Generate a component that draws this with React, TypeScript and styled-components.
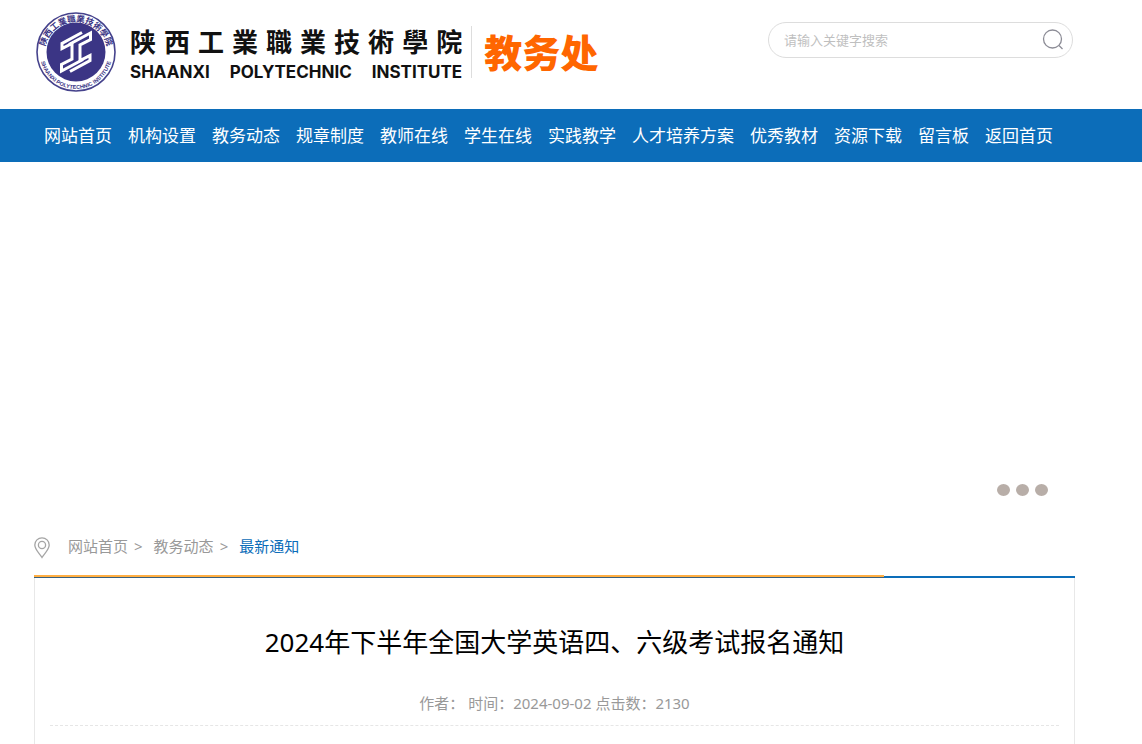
import React from "react";
import styled, { createGlobalStyle } from "styled-components";

const Global = createGlobalStyle`
  * { box-sizing: border-box; }
  body {
    margin: 0;
    background: #fff;
    color: #000;
    font-family: "Noto Sans", "Noto Sans CJK SC", sans-serif;
    font-size: 15px;
  }
  a { color: inherit; text-decoration: none; }
`;

const Header = styled.header`
  display: flex;
  justify-content: space-between;
  align-items: flex-start;
  height: 109px;
  padding: 12px 69px 0 36px;
`;

const Brand = styled.a`
  display: flex;
  align-items: center;
  white-space: nowrap;
`;

const School = styled.span`
  display: flex;
  flex-direction: column;
  margin-left: 14px;
  padding-top: 4px;
`;

const SchoolName = styled.span`
  display: flex;
  gap: 8px;
  font-size: 26px;
  line-height: 36px;
  font-weight: 700;
  color: #111;
`;

const SchoolLatin = styled.span`
  display: flex;
  justify-content: space-between;
  font: 700 17px/24px Inter, sans-serif;
  color: #111;
`;

const Department = styled.span`
  margin-left: 9px;
  padding-left: 12px;
  border-left: 1px solid #ddd;
  font-size: 38px;
  line-height: 52px;
  font-weight: 900;
  color: #ff6600;
`;

const SearchBox = styled.form`
  display: flex;
  align-items: center;
  width: 305px;
  height: 36px;
  margin-top: 10px;
  padding: 0 8px 1px 15px;
  border: 1px solid #ddd;
  border-radius: 18px;
`;

const SearchInput = styled.input`
  flex: 1;
  min-width: 0;
  padding: 0;
  border: 0;
  outline: 0;
  background: none;
  font: inherit;
  font-size: 13px;
  &::placeholder { color: #bfbfbf; opacity: 1; }
`;

const SearchButton = styled.button`
  display: flex;
  padding: 0;
  border: 0;
  background: none;
`;

const Nav = styled.nav`
  display: flex;
  gap: 16px;
  height: 53px;
  padding: 0 44px;
  background: #0c6db9;
  color: #fff;
  font-size: 17px;
  line-height: 53px;
  white-space: nowrap;
`;

const Banner = styled.section`
  display: flex;
  justify-content: flex-end;
  align-items: flex-end;
  gap: 6px;
  height: 334px;
  padding-right: 94px;
`;

const Dot = styled.button`
  width: 13px;
  height: 12px;
  padding: 0;
  border: 0;
  border-radius: 50%;
  background: #b8aea8;
`;

const Main = styled.main`
  margin: 0 67px 0 34px;
`;

const Crumbs = styled.nav`
  display: flex;
  align-items: center;
  height: 79px;
  padding-top: 20px;
  color: #999;
  line-height: 22px;
`;

const PinIcon = styled.svg`
  margin-top: 4px;
`;

const CrumbLink = styled.a`
  margin-right: 6px;
`;

const Arrow = styled.span`
  margin-right: 11px;
`;

const Current = styled.a`
  color: #0c6db9;
`;

const Rule = styled.div`
  height: 3px;
  border-bottom: 2px solid #0c6db9;
`;

const RuleAccent = styled.div`
  width: calc(100% - 191px);
  height: 3px;
  background: #ffae42;
  border-bottom: 1px solid #39617f;
`;

const Article = styled.article`
  min-height: 190px;
  padding: 0 15px;
  border: solid #e8e8e8;
  border-width: 0 1px;
  text-align: center;
`;

const Title = styled.h1`
  margin: 0;
  padding-top: 44px;
  font-size: 26px;
  line-height: 40px;
  font-weight: 400;
`;

const Meta = styled.p`
  margin: 0;
  padding: 29px 0 10px;
  border-bottom: 1px dashed #e6e6e6;
  color: #999;
  line-height: 24px;
`;

const navItems = [
  "网站首页", "机构设置", "教务动态", "规章制度", "教师在线", "学生在线",
  "实践教学", "人才培养方案", "优秀教材", "资源下载", "留言板", "返回首页",
];

const Seal = () => (
  <svg width="80" height="80" viewBox="0 0 80 80" aria-hidden="true">
    <defs>
      <path id="ringTop" d="M9 47 A31.5 31.5 0 1 1 71 47" />
      <path id="ringBottom" d="M4 41 A36 36 0 0 0 76 41" />
    </defs>
    <circle cx="40" cy="40" r="39" fill="#fff" stroke="#45428c" strokeWidth="1.6" />
    <circle cx="40" cy="40" r="29.5" fill="#3b3585" />
    <g fill="#3b3585" fontWeight="700">
      <text fontSize="8.5">
        <textPath href="#ringTop" startOffset="50%" textAnchor="middle">陕西工業職業技術學院</textPath>
      </text>
      <text fontSize="5.5" fontFamily="Liberation Sans">
        <textPath href="#ringBottom" startOffset="50%" textAnchor="middle">SHAANXI POLYTECHNIC INSTITUTE</textPath>
      </text>
    </g>
    <g fill="none" stroke="#fff" strokeWidth="3">
      <path d="M46 20.500 L26 31.500 V36.500 L36 31.500 V47 L25.500 52.500 V59 L47 47.500" />
      <path d="M34 59.500 L54 48.500 V43.500 L44 48.500 V33 L54.500 27.500 V21 L33 32.500" />
    </g>
  </svg>
);

export default function App() {
  return (
    <>
      <Global />
      <Header>
        <Brand href="#">
          <Seal />
          <School>
            <SchoolName>
              {[..."陕西工業職業技術學院"].map((c, i) => <span key={i}>{c}</span>)}
            </SchoolName>
            <SchoolLatin>
              <span>SHAANXI</span> <span>POLYTECHNIC</span> <span>INSTITUTE</span>
            </SchoolLatin>
          </School>
          <Department>教务处</Department>
        </Brand>
        <SearchBox role="search">
          <SearchInput type="search" aria-label="搜索" placeholder="请输入关键字搜索" />
          <SearchButton type="button" aria-label="搜索">
            <svg width="22" height="22" viewBox="0 0 22 22" fill="none" stroke="#8c8c96" strokeWidth="1.3">
              <circle cx="10.5" cy="10" r="9" />
              <path d="M17 16.5l3.5 3.5" />
            </svg>
          </SearchButton>
        </SearchBox>
      </Header>
      <Nav>{navItems.map((t) => <a href="#" key={t}>{t}</a>)}</Nav>
      <Banner>
        <Dot type="button" aria-label="1" />
        <Dot type="button" aria-label="2" />
        <Dot type="button" aria-label="3" />
      </Banner>
      <Main>
        <Crumbs>
          <PinIcon width="34" height="22" viewBox="0 0 34 22" fill="none" stroke="#a5a5a5" strokeWidth="1.3" aria-hidden="true">
            <path d="M8 20.5C5.500 16.500 .8 12.500 .8 8a7.200 7.200 0 0 1 14.400 0c0 4.500-4.700 8.500-7.200 12.500z" />
            <circle cx="8" cy="8" r="3.600" />
          </PinIcon>
          <CrumbLink href="#">网站首页</CrumbLink><Arrow>&gt;</Arrow>
          <CrumbLink href="#">教务动态</CrumbLink><Arrow>&gt;</Arrow>
          <Current href="#">最新通知</Current>
        </Crumbs>
        <Rule><RuleAccent /></Rule>
        <Article>
          <Title>2024年下半年全国大学英语四、六级考试报名通知</Title>
          <Meta>作者： 时间：2024-09-02 点击数：2130</Meta>
        </Article>
      </Main>
    </>
  );
}
